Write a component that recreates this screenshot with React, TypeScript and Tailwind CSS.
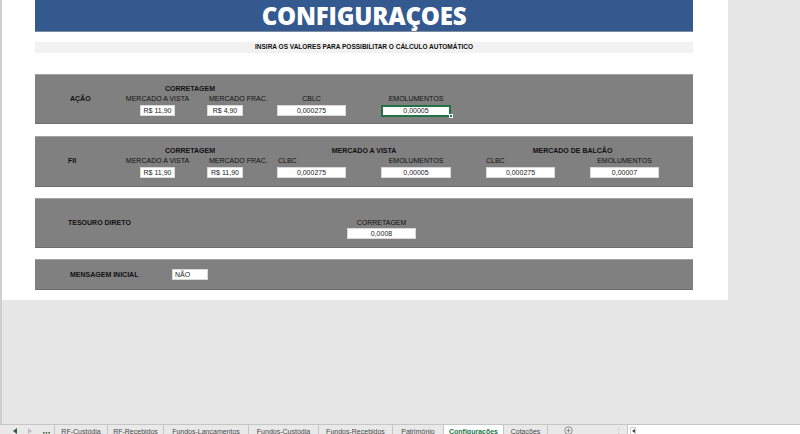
import React from 'react';

const font = { fontFamily: '"Liberation Sans", Arial, sans-serif' };

const Cell: React.FC<{ value: string; className?: string; align?: 'left' | 'center' }> = ({ value, className = '', align = 'center' }) => (
  <div
    className={`h-[11px] bg-white border border-[#d9d9d9] text-[7px] leading-[9px] text-[#1a1a1a] ${
      align === 'left' ? 'text-left pl-[2px]' : 'text-center'
    } ${className}`}
  >
    {value}
  </div>
);

const tabs = [
  { name: 'RF-Custódia', w: 'w-[53px]' },
  { name: 'RF-Recebidos', w: 'w-[56px]' },
  { name: 'Fundos-Lancamentos', w: 'w-[85px]' },
  { name: 'Fundos-Custódia', w: 'w-[70px]' },
  { name: 'Fundos-Recebidos', w: 'w-[74px]' },
  { name: 'Patrimônio', w: 'w-[51px]' },
  { name: 'Configuracões', w: 'w-[60px]', active: true },
  { name: 'Cotacões', w: 'w-[44px]' },
];

export default function App() {
  return (
    <div className="w-[800px] h-[434px] overflow-hidden flex flex-col bg-[#e6e6e6]" style={font}>
      {/* Sheet area */}
      <div className="flex-1 border-l-2 border-[#cfcfcf]">
        <div className="w-[726px] h-[300px] bg-white pl-[33px]">
          <div className="w-[658px] flex flex-col">
            {/* Title */}
            <div className="h-[32px] bg-[#34598f] flex items-center justify-center border-b border-[#7f8ba0]">
              <span
                className="text-white font-extrabold text-[24px] tracking-[-0.2px] leading-none"
                style={{ fontFamily: '"Open Sans", "Liberation Sans", sans-serif' }}
              >
                CONFIGURAÇOES
              </span>
            </div>

            {/* Subtitle bar */}
            <div className="mt-[10px] h-[11px] bg-[#f2f2f2] flex items-center justify-center">
              <span className="text-[6.5px] font-bold text-[#111] leading-none">
                INSIRA OS VALORES PARA POSSIBILITAR O CÁLCULO AUTOMÁTICO
              </span>
            </div>

            {/* AÇÃO */}
            <div className="mt-[21px] h-[50px] bg-[#808080] border-t border-[#a3a3a3] border-b border-b-[#6e6e6e] pt-[9px] text-[7px] text-[#111] leading-[10px]">
              <div className="grid grid-cols-[90px_65px_17px_63px_7px_69px_35px_70px_35px_69px_35px_69px] grid-rows-[10px_10px_12px]">
                <div className="col-start-2 col-span-3 row-start-1 text-center pr-[15px] font-bold">CORRETAGEM</div>
                <div className="col-start-1 row-start-2 pl-[35px] font-bold">AÇÃO</div>
                <div className="col-start-2 row-start-2 text-center">MERCADO A VISTA</div>
                <div className="col-start-4 row-start-2 pl-[2px]">MERCADO FRAC.</div>
                <div className="col-start-6 row-start-2 text-center">CBLC</div>
                <div className="col-start-8 row-start-2 text-center">EMOLUMENTOS</div>
                <div className="col-start-2 row-start-3 flex justify-center pt-[1px]">
                  <Cell value="R$ 11,90" className="w-[35px]" />
                </div>
                <div className="col-start-4 row-start-3 pt-[1px]">
                  <Cell value="R$ 4,90" className="w-[36px]" />
                </div>
                <div className="col-start-6 row-start-3 pt-[1px]">
                  <Cell value="0,000275" />
                </div>
                <div className="col-start-8 row-start-3 pt-[1px] relative">
                  <div className="h-[12px] bg-white border-2 border-[#217346] text-[7px] leading-[8px] text-center text-[#1a1a1a]">
                    0,00005
                  </div>
                  <div className="absolute right-[-2px] bottom-[-2px] w-[4px] h-[4px] bg-[#217346] border border-white" />
                </div>
              </div>
            </div>

            {/* FII */}
            <div className="mt-[12px] h-[51px] bg-[#808080] border-t border-[#a3a3a3] border-b border-b-[#6e6e6e] pt-[9px] text-[7px] text-[#111] leading-[10px]">
              <div className="grid grid-cols-[90px_65px_17px_63px_7px_69px_35px_70px_35px_69px_35px_69px] grid-rows-[10px_10px_12px]">
                <div className="col-start-2 col-span-3 row-start-1 text-center pr-[15px] font-bold">CORRETAGEM</div>
                <div className="col-start-6 col-span-3 row-start-1 text-center font-bold">MERCADO A VISTA</div>
                <div className="col-start-10 col-span-3 row-start-1 text-center font-bold">MERCADO DE BALCÃO</div>
                <div className="col-start-1 row-start-2 pl-[33px] font-bold">FII</div>
                <div className="col-start-2 row-start-2 text-center">MERCADO A VISTA</div>
                <div className="col-start-4 row-start-2 pl-[2px]">MERCADO FRAC.</div>
                <div className="col-start-6 row-start-2 pl-[1px]">CLBC</div>
                <div className="col-start-8 row-start-2 text-center">EMOLUMENTOS</div>
                <div className="col-start-10 row-start-2">CLBC</div>
                <div className="col-start-12 row-start-2 text-center">EMOLUMENTOS</div>
                <div className="col-start-2 row-start-3 flex justify-center pt-[1px]">
                  <Cell value="R$ 11,90" className="w-[35px]" />
                </div>
                <div className="col-start-4 row-start-3 pt-[1px]">
                  <Cell value="R$ 11,90" className="w-[36px]" />
                </div>
                <div className="col-start-6 row-start-3 pt-[1px]">
                  <Cell value="0,000275" />
                </div>
                <div className="col-start-8 row-start-3 pt-[1px]">
                  <Cell value="0,00005" />
                </div>
                <div className="col-start-10 row-start-3 pt-[1px]">
                  <Cell value="0,000275" />
                </div>
                <div className="col-start-12 row-start-3 pt-[1px]">
                  <Cell value="0,00007" />
                </div>
              </div>
            </div>

            {/* TESOURO DIRETO */}
            <div className="mt-[11px] h-[50px] bg-[#808080] border-t border-[#a3a3a3] border-b border-b-[#6e6e6e] pt-[19px] text-[7px] text-[#111] leading-[10px]">
              <div className="grid grid-cols-[312px_69px] grid-rows-[10px_11px]">
                <div className="col-start-1 row-start-1 pl-[33px] font-bold">TESOURO DIRETO</div>
                <div className="col-start-2 row-start-1 text-center">CORRETAGEM</div>
                <div className="col-start-2 row-start-2">
                  <Cell value="0,0008" />
                </div>
              </div>
            </div>

            {/* MENSAGEM INICIAL */}
            <div className="mt-[11px] h-[31px] bg-[#808080] border-t border-[#a3a3a3] border-b border-b-[#6e6e6e] flex items-center text-[7px] text-[#111] leading-[10px]">
              <div className="w-[137px] pl-[35px] font-bold">MENSAGEM INICIAL</div>
              <Cell value="NÃO" align="left" className="w-[36px]" />
            </div>
          </div>
        </div>
      </div>

      {/* Sheet tabs */}
      <div className="h-[10px] overflow-hidden border-t border-[#c6c6c6] flex items-start bg-[#e9e9e9] text-[7px] text-[#444]">
        <div className="w-[54px] h-[20px] flex items-start pt-[3px] pl-[13px] gap-[11px]">
          <svg width="4" height="6" viewBox="0 0 4 6"><path d="M4 0 L0 3 L4 6 Z" fill="#2f5e3a" /></svg>
          <svg width="4" height="6" viewBox="0 0 4 6"><path d="M0 0 L4 3 L0 6 Z" fill="#bdbdbd" /></svg>
          <svg width="7" height="6" viewBox="0 0 7 6">
            <rect x="0" y="4" width="1.5" height="1.5" fill="#2f5e3a" />
            <rect x="2.7" y="4" width="1.5" height="1.5" fill="#2f5e3a" />
            <rect x="5.4" y="4" width="1.5" height="1.5" fill="#2f5e3a" />
          </svg>
        </div>
        {tabs.map((t) => (
          <div
            key={t.name}
            className={`${t.w} h-[20px] shrink-0 text-center pt-[3px] leading-none border-l border-[#c6c6c6] ${
              t.active ? 'bg-white text-[#217346] font-bold' : ''
            }`}
          >
            {t.name}
          </div>
        ))}
        <div className="w-[1px] h-[20px] bg-[#c6c6c6]" />
        <div className="w-[40px] flex justify-center pt-[1px]">
          <svg width="9" height="9" viewBox="0 0 9 9">
            <circle cx="4.5" cy="4.5" r="3.8" fill="none" stroke="#7a7a7a" strokeWidth="0.8" />
            <path d="M4.5 2.5 V6.5 M2.5 4.5 H6.5" stroke="#7a7a7a" strokeWidth="0.8" />
          </svg>
        </div>
        <div className="w-[38px] flex justify-end pr-[4px] pt-[2px] text-[#b0b0b0] leading-none">⋮</div>
        <div className="flex-1 h-[20px] bg-white border-l border-[#c6c6c6] ml-[1px] pt-[2px] pl-[2px]">
          <div className="w-[6px] h-[8px] border border-[#d0d0d0] flex items-center justify-center">
            <svg width="3" height="4" viewBox="0 0 3 4"><path d="M3 0 L0 2 L3 4 Z" fill="#444" /></svg>
          </div>
        </div>
      </div>
    </div>
  );
}
